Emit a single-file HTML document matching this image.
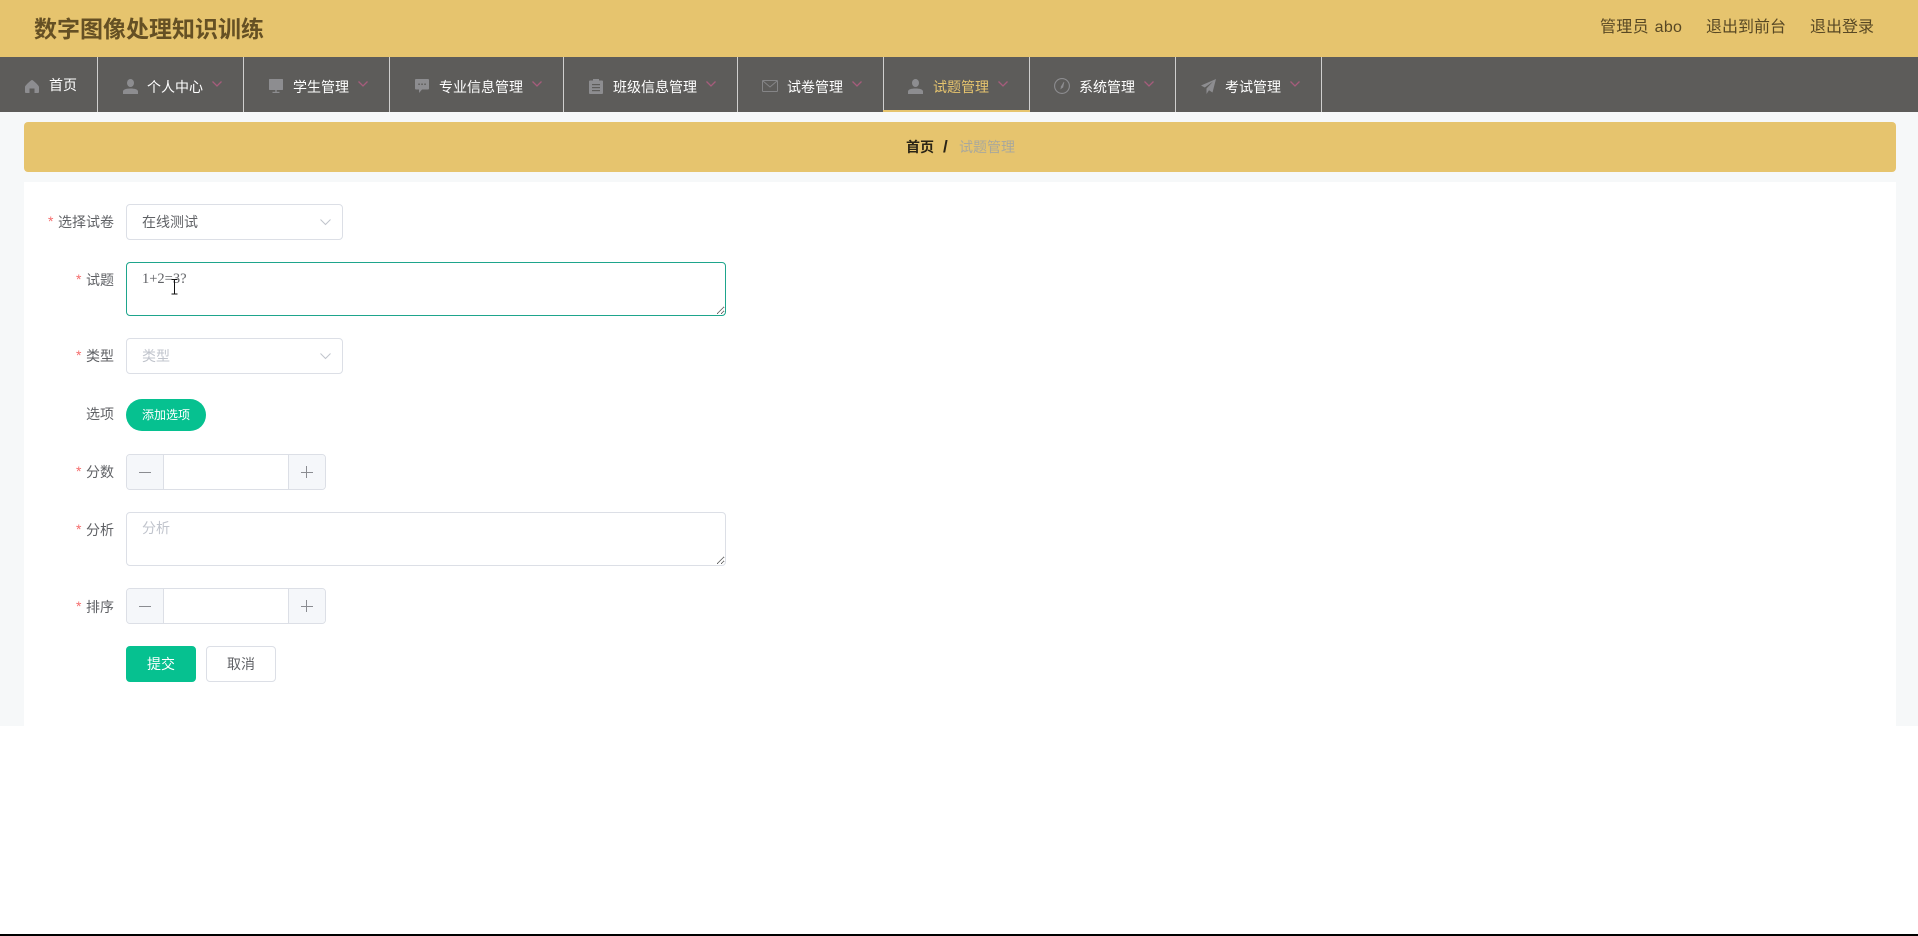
<!DOCTYPE html>
<html lang="zh-CN">
<head>
<meta charset="utf-8">
<title>数字图像处理知识训练</title>
<style>
html,body{margin:0;padding:0;background:#fff;}
body{position:relative;width:1918px;height:936px;overflow:hidden;font-family:"Liberation Sans","Noto Sans CJK SC",sans-serif;font-size:14px;color:#606266;}
.a{position:absolute;box-sizing:border-box;}
.t{position:absolute;white-space:nowrap;line-height:20px;}
.nv{color:#fff;font-size:14px;}
.dv{position:absolute;top:57px;width:1px;height:55px;background:#cfcfce;}
svg{position:absolute;display:block;overflow:visible;}
.ic{fill:#8d8d90;}
.lb{color:#606266;font-size:14px;}
.st{color:#f56c6c;font-size:14px;}
.box{position:absolute;box-sizing:border-box;border:1px solid #dcdfe6;border-radius:4px;background:#fff;}
textarea{position:absolute;box-sizing:border-box;margin:0;border-radius:4px;background:#fff;padding:5px 15px;font-size:14px;line-height:21px;outline:none;resize:vertical;}
textarea::placeholder{color:#c0c4cc;font-family:"Liberation Sans","Noto Sans CJK SC",sans-serif;}
</style>
</head>
<body>
<div class="a" style="left:0;top:0;width:1918px;height:57px;background:#e6c46e;"></div>
<div class="t" style="left:34px;top:14px;font-size:23px;line-height:30px;font-weight:700;color:#655024;">数字图像处理知识训练</div>
<div class="t" style="left:1600px;top:17px;font-size:16px;line-height:22px;color:#584824;word-spacing:1px;letter-spacing:.3px;">管理员 abo</div>
<div class="t" style="left:1706px;top:17px;font-size:16px;line-height:22px;color:#584824;">退出到前台</div>
<div class="t" style="left:1810px;top:17px;font-size:16px;line-height:22px;color:#584824;">退出登录</div>

<div class="a" style="left:0;top:57px;width:1918px;height:55px;background:#5d5c5a;"></div>
<div class="dv" style="left:97px"></div><div class="dv" style="left:243px"></div><div class="dv" style="left:389px"></div><div class="dv" style="left:563px"></div><div class="dv" style="left:737px"></div><div class="dv" style="left:883px"></div><div class="dv" style="left:1029px"></div><div class="dv" style="left:1175px"></div><div class="dv" style="left:1321px"></div>
<div class="a" style="left:883px;top:110px;width:147px;height:2px;background:#e6c46e;"></div>

<!-- home -->
<svg class="ic" style="left:25px;top:80px" width="14" height="13" viewBox="0 0 14 13"><path d="M7 0C8 0 14 5.500 14 7L14 12C14 12.600 13.600 13 13 13L9.500 13L9.500 8.500L4.500 8.500L4.500 13L1 13C.4 13 0 12.600 0 12L0 7C0 5.500 6 0 7 0Z"/></svg>
<div class="t nv" style="left:49px;top:75px">首页</div>

<!-- user -->
<svg class="ic" style="left:123px;top:79px" width="15" height="15" viewBox="0 0 15 15"><ellipse cx="7.500" cy="4" rx="3.500" ry="4"/><path d="M0 15L0 12.500C0 10.500 3 9.500 7.500 9.500C12 9.500 15 10.500 15 12.500L15 15Z"/></svg>
<div class="t nv" style="left:147px;top:77px">个人中心</div>
<svg style="left:212px;top:81px" width="10" height="6" viewBox="0 0 10 6"><path d="M.5 .5L5 5L9.500 .5" fill="none" stroke="#a65c7c" stroke-width="1.300"/></svg>

<!-- monitor -->
<svg class="ic" style="left:269px;top:79px" width="14" height="14" viewBox="0 0 14 14"><rect x="0" y="0" width="14" height="11" rx=".6"/><rect x="6.300" y="11" width="1.400" height="2"/><rect x="3.500" y="12.800" width="7" height="1.200"/></svg>
<div class="t nv" style="left:293px;top:77px">学生管理</div>
<svg style="left:358px;top:81px" width="10" height="6" viewBox="0 0 10 6"><path d="M.5 .5L5 5L9.500 .5" fill="none" stroke="#a65c7c" stroke-width="1.300"/></svg>

<!-- chat -->
<svg class="ic" style="left:415px;top:79px" width="14" height="14" viewBox="0 0 14 14"><path d="M1 0L13 0C13.600 0 14 .4 14 1L14 9.500C14 10.100 13.600 10.500 13 10.500L7 10.500L4 14L4 10.500L1 10.500C.4 10.500 0 10.100 0 9.500L0 1C0 .4 .4 0 1 0Z"/><g fill="#5d5c5a"><rect x="3.300" y="4.500" width="1.500" height="1.500"/><rect x="6.300" y="4.500" width="1.500" height="1.500"/><rect x="9.300" y="4.500" width="1.500" height="1.500"/></g></svg>
<div class="t nv" style="left:439px;top:77px">专业信息管理</div>
<svg style="left:532px;top:81px" width="10" height="6" viewBox="0 0 10 6"><path d="M.5 .5L5 5L9.500 .5" fill="none" stroke="#a65c7c" stroke-width="1.300"/></svg>

<!-- clipboard -->
<svg class="ic" style="left:589px;top:79px" width="14" height="15" viewBox="0 0 14 15"><path d="M1 1.500L4 1.500L4 0L10 0L10 1.500L13 1.500C13.600 1.500 14 1.900 14 2.500L14 14C14 14.600 13.600 15 13 15L1 15C.4 15 0 14.600 0 14L0 2.500C0 1.900 .4 1.500 1 1.500Z"/><g fill="#5d5c5a"><rect x="3" y="5" width="8" height="1.200"/><rect x="3" y="8" width="8" height="1.200"/><rect x="3" y="11" width="8" height="1.200"/></g></svg>
<div class="t nv" style="left:613px;top:77px">班级信息管理</div>
<svg style="left:706px;top:81px" width="10" height="6" viewBox="0 0 10 6"><path d="M.5 .5L5 5L9.500 .5" fill="none" stroke="#a65c7c" stroke-width="1.300"/></svg>

<!-- mail -->
<svg style="left:762px;top:80px" width="16" height="12" viewBox="0 0 16 12"><rect x=".5" y=".5" width="15" height="11" rx=".6" fill="none" stroke="#858587"/><path d="M.7 .7L8 7L15.300 .7" fill="none" stroke="#858587"/></svg>
<div class="t nv" style="left:787px;top:77px">试卷管理</div>
<svg style="left:852px;top:81px" width="10" height="6" viewBox="0 0 10 6"><path d="M.5 .5L5 5L9.500 .5" fill="none" stroke="#a65c7c" stroke-width="1.300"/></svg>

<!-- user active -->
<svg class="ic" style="left:908px;top:79px" width="15" height="15" viewBox="0 0 15 15"><ellipse cx="7.500" cy="4" rx="3.500" ry="4"/><path d="M0 15L0 12.500C0 10.500 3 9.500 7.500 9.500C12 9.500 15 10.500 15 12.500L15 15Z"/></svg>
<div class="t nv" style="left:933px;top:77px;color:#e6c46e">试题管理</div>
<svg style="left:998px;top:81px" width="10" height="6" viewBox="0 0 10 6"><path d="M.5 .5L5 5L9.500 .5" fill="none" stroke="#a65c7c" stroke-width="1.300"/></svg>

<!-- compass -->
<svg style="left:1054px;top:78px" width="16" height="16" viewBox="0 0 16 16"><circle cx="8" cy="8" r="7.400" fill="none" stroke="#8d8d90" stroke-width="1.100"/><path d="M10 4L8.800 9.500L7 9L10 4Z" fill="#8d8d90" stroke="#8d8d90" stroke-width=".6"/><path d="M7 9L8.800 9.500L6.300 11.500Z" fill="#8d8d90"/></svg>
<div class="t nv" style="left:1079px;top:77px">系统管理</div>
<svg style="left:1144px;top:81px" width="10" height="6" viewBox="0 0 10 6"><path d="M.5 .5L5 5L9.500 .5" fill="none" stroke="#a65c7c" stroke-width="1.300"/></svg>

<!-- plane -->
<svg class="ic" style="left:1201px;top:79px" width="15" height="15" viewBox="0 0 15 15"><path d="M15 0L0 6.500L3.800 8.500L12 2.500L5.500 9.500L5.500 15L8 11.300L11.500 13.500Z"/></svg>
<div class="t nv" style="left:1225px;top:77px">考试管理</div>
<svg style="left:1290px;top:81px" width="10" height="6" viewBox="0 0 10 6"><path d="M.5 .5L5 5L9.500 .5" fill="none" stroke="#a65c7c" stroke-width="1.300"/></svg>

<!-- page background -->
<div class="a" style="left:0;top:112px;width:1918px;height:614px;background:#f6f8f9;"></div>
<div class="a" style="left:24px;top:122px;width:1872px;height:50px;background:#e6c46e;border-radius:4px;"></div>
<div class="t" style="left:906px;top:137px;font-weight:700;color:#2a2416;">首页</div>
<div class="t" style="left:943px;top:137px;font-weight:700;font-size:17px;color:#2a2416;">/</div>
<div class="t" style="left:959px;top:137px;color:#a9a89c;">试题管理</div>
<div class="a" style="left:24px;top:182px;width:1872px;height:544px;background:#fff;"></div>

<!-- labels -->
<div class="t st" style="left:48px;top:211px">*</div><div class="t lb" style="left:58px;top:212px">选择试卷</div>
<div class="t st" style="left:76px;top:269px">*</div><div class="t lb" style="left:86px;top:270px">试题</div>
<div class="t st" style="left:76px;top:345px">*</div><div class="t lb" style="left:86px;top:346px">类型</div>
<div class="t lb" style="left:86px;top:404px">选项</div>
<div class="t st" style="left:76px;top:461px">*</div><div class="t lb" style="left:86px;top:462px">分数</div>
<div class="t st" style="left:76px;top:519px">*</div><div class="t lb" style="left:86px;top:520px">分析</div>
<div class="t st" style="left:76px;top:596px">*</div><div class="t lb" style="left:86px;top:597px">排序</div>

<!-- select 1 -->
<div class="box" style="left:126px;top:204px;width:217px;height:36px;"></div>
<div class="t" style="left:142px;top:212px;color:#606266;">在线测试</div>
<svg style="left:320px;top:219px" width="11" height="6" viewBox="0 0 11 6"><path d="M.5 .5L5.500 5.500L10.500 .5" fill="none" stroke="#c0c4cc" stroke-width="1"/></svg>

<!-- question textarea -->
<textarea style="left:126px;top:262px;width:600px;height:54px;border:1px solid #1ea58c;color:#606266;font-family:'Liberation Serif',serif;font-size:14.500px;padding-top:6px;">1+2=3?</textarea>
<svg style="left:170px;top:279px" width="9" height="16" viewBox="0 0 9 16"><path d="M1.500 .5L7.500 .5M4.500 .5L4.500 15M1.500 15L7.500 15" fill="none" stroke="#111" stroke-width="1"/></svg>

<!-- select 2 -->
<div class="box" style="left:126px;top:338px;width:217px;height:36px;"></div>
<div class="t" style="left:142px;top:346px;color:#c0c4cc;">类型</div>
<svg style="left:320px;top:353px" width="11" height="6" viewBox="0 0 11 6"><path d="M.5 .5L5.500 5.500L10.500 .5" fill="none" stroke="#c0c4cc" stroke-width="1"/></svg>

<!-- add option -->
<div class="a" style="left:126px;top:399px;width:80px;height:32px;border-radius:16px;background:#06c190;color:#fff;font-size:12px;line-height:32px;text-align:center;">添加选项</div>

<!-- number 1 -->
<div class="box" style="left:126px;top:454px;width:200px;height:36px;overflow:hidden;">
<div class="a" style="left:0;top:0;width:37px;height:34px;background:#f5f7fa;border-right:1px solid #dcdfe6;"></div>
<div class="a" style="left:161px;top:0;width:37px;height:34px;background:#f5f7fa;border-left:1px solid #dcdfe6;"></div>
</div>
<div class="a" style="left:139px;top:472px;width:12px;height:1px;background:#8a8c91;"></div>
<div class="a" style="left:301px;top:472px;width:12px;height:1px;background:#8a8c91;"></div>
<div class="a" style="left:306px;top:466px;width:1px;height:12px;background:#8a8c91;"></div>

<!-- analysis textarea -->
<textarea placeholder="分析" style="left:126px;top:512px;width:600px;height:54px;border:1px solid #dcdfe6;"></textarea>

<!-- number 2 -->
<div class="box" style="left:126px;top:588px;width:200px;height:36px;overflow:hidden;">
<div class="a" style="left:0;top:0;width:37px;height:34px;background:#f5f7fa;border-right:1px solid #dcdfe6;"></div>
<div class="a" style="left:161px;top:0;width:37px;height:34px;background:#f5f7fa;border-left:1px solid #dcdfe6;"></div>
</div>
<div class="a" style="left:139px;top:606px;width:12px;height:1px;background:#8a8c91;"></div>
<div class="a" style="left:301px;top:606px;width:12px;height:1px;background:#8a8c91;"></div>
<div class="a" style="left:306px;top:600px;width:1px;height:12px;background:#8a8c91;"></div>

<!-- buttons -->
<div class="a" style="left:126px;top:646px;width:70px;height:36px;border-radius:4px;background:#06c190;color:#fff;line-height:36px;text-align:center;">提交</div>
<div class="a" style="left:206px;top:646px;width:70px;height:36px;border-radius:4px;background:#fff;border:1px solid #dcdfe6;color:#606266;line-height:34px;text-align:center;">取消</div>

<!-- bottom strip -->
<div class="a" style="left:0;top:934px;width:1918px;height:2px;background:#000;"></div>
</body>
</html>
